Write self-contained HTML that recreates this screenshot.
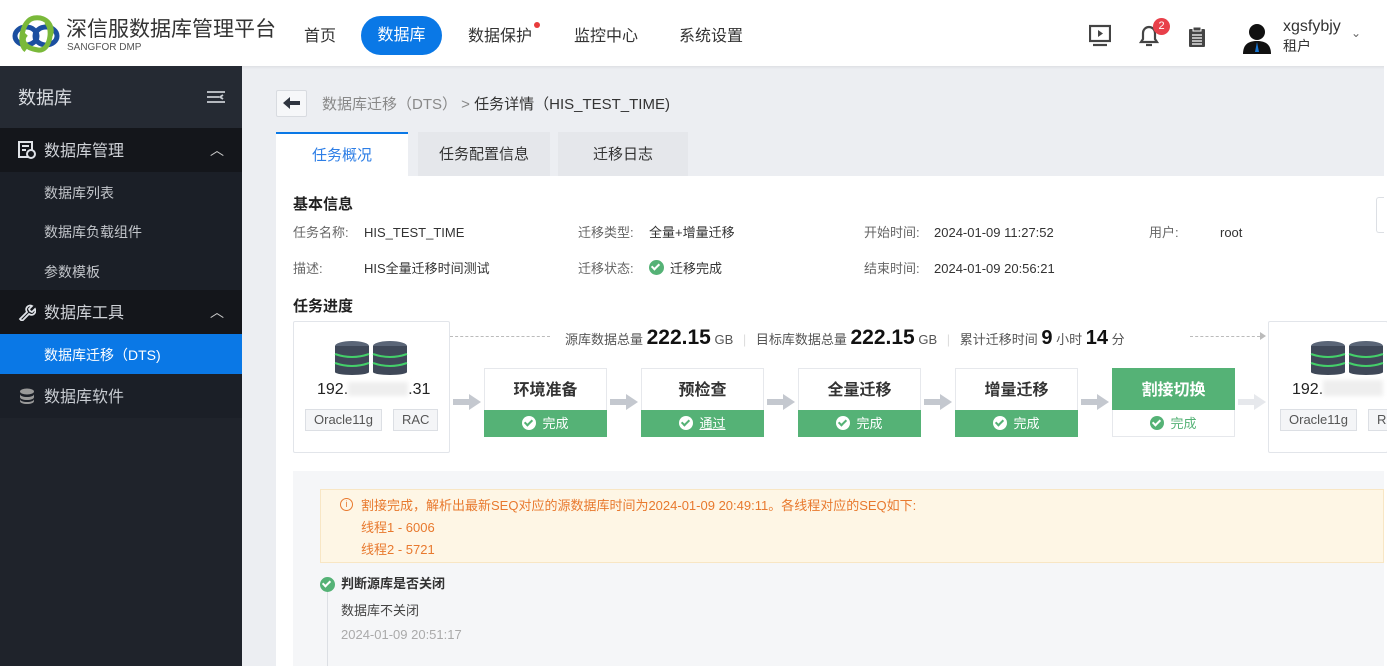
<!DOCTYPE html><html><head><meta charset="utf-8"><style>
*{margin:0;padding:0;box-sizing:border-box}
body{width:1387px;height:666px;overflow:hidden;position:relative;background:#eceef2;font-family:"Liberation Sans","Noto Sans CJK SC",sans-serif;color:#333;font-size:14px}
.a{position:absolute;white-space:nowrap;line-height:1.3}
.hdr{left:0;top:0;width:1387px;height:66px;background:#fff;box-shadow:0 1px 3px rgba(0,0,0,.08)}
.nav{top:27px;font-size:16px;color:#333}
.sb{left:0;top:66px;width:242px;height:600px;background:#1f232b}
.grp{left:0;width:242px;height:44px;background:#14161b;color:#d0d3d8;font-size:16px}
.sub{left:44px;font-size:14px;color:#c2c5ca}
.lbl{color:#666;font-size:13px;line-height:18px}
.val{color:#333;font-size:13px;line-height:18px}
.step{width:123px;height:69px;background:#fff;border:1px solid #e6e8ec}
.step .t{position:absolute;left:0;right:0;top:12px;text-align:center;font-size:16px;font-weight:bold;color:#333}
.step .b{position:absolute;left:-1px;right:-1px;bottom:-1px;height:27px;background:#55b276;color:#fff;text-align:center;font-size:13px;line-height:27px}
.ck{display:inline-block;width:14px;height:14px;border-radius:50%;background:#fff;vertical-align:-2px;margin-right:6px;position:relative}
.ck:after{content:"";position:absolute;left:4px;top:2px;width:3px;height:6px;border:solid #55b276;border-width:0 2px 2px 0;transform:rotate(45deg)}
.ckg{background:#55b276}.ckg:after{border-color:#fff}
.tag{height:22px;border:1px solid #dcdfe4;background:#f4f5f7;color:#555;font-size:13px;line-height:20px;padding:0 8px;top:409px}
</style></head><body>
<div class="a hdr"></div>
<svg class="a" style="left:12px;top:14px" width="48" height="40" viewBox="0 0 48 40"><ellipse cx="14" cy="22" rx="11" ry="9" fill="none" stroke="#1b4fa0" stroke-width="5"/><ellipse cx="34" cy="22" rx="11" ry="9" fill="none" stroke="#1b4fa0" stroke-width="5"/><path d="M14 36 C6 30 10 6 22 4 C36 2 42 14 38 22 M34 8 C42 14 38 38 26 36 C12 34 8 26 14 20" fill="none" stroke="#7ab93a" stroke-width="5"/></svg>
<div class="a" style="left:66px;top:16px;font-size:21px;color:#333">深信服数据库管理平台</div>
<div class="a" style="left:67px;top:42px;font-size:10px;color:#555;line-height:12px">SANGFOR DMP</div>
<div class="a nav" style="left:304px">首页</div>
<div class="a" style="left:361px;top:16px;width:81px;height:39px;border-radius:20px;background:#0a78e6;color:#fff;font-size:16px;text-align:center;line-height:40px">数据库</div>
<div class="a nav" style="left:468px">数据保护</div>
<div class="a" style="left:534px;top:22px;width:6px;height:6px;border-radius:50%;background:#e83b3b"></div>
<div class="a nav" style="left:574px">监控中心</div>
<div class="a nav" style="left:679px">系统设置</div>
<svg class="a" style="left:1089px;top:24px" width="22" height="24" viewBox="0 0 22 24"><rect x="1" y="2" width="20" height="15" fill="none" stroke="#444" stroke-width="2.2"/><path d="M9 6v7l5-3.5z" fill="#444"/><path d="M4 21h14" stroke="#444" stroke-width="2.2"/></svg>
<svg class="a" style="left:1138px;top:24px" width="22" height="24" viewBox="0 0 22 24"><path d="M3 18h16l-2-3V9a6 6 0 0 0-12 0v6z" fill="none" stroke="#444" stroke-width="2.2"/><path d="M8 21h6" stroke="#444" stroke-width="2.2"/></svg>
<div class="a" style="left:1153px;top:18px;width:17px;height:17px;border-radius:50%;background:#e8404a;color:#fff;font-size:11px;text-align:center;line-height:17px">2</div>
<svg class="a" style="left:1188px;top:26px" width="18" height="22" viewBox="0 0 18 22"><rect x="1" y="3" width="16" height="18" rx="1" fill="#444"/><rect x="5" y="1" width="8" height="4" fill="#444" stroke="#fff"/><path d="M4 9h10M4 12h10M4 15h10M4 18h10" stroke="#fff" stroke-width="1.3"/></svg>
<svg class="a" style="left:1242px;top:22px" width="30" height="32" viewBox="0 0 30 32"><circle cx="15" cy="10" r="8" fill="#111"/><path d="M1 32c0-10 6-13 14-13s14 3 14 13z" fill="#111"/><path d="M15 20l-2 10h4z" fill="#1976d2"/></svg>
<div class="a" style="left:1283px;top:17px;font-size:16px;color:#333">xgsfybjy</div>
<div class="a" style="left:1283px;top:37px;font-size:14px;color:#333">租户</div>
<div class="a" style="left:1351px;top:26px;font-size:12px;color:#666">⌄</div>
<div class="a" style="left:1384px;top:66px;width:3px;height:600px;background:#fff"></div>

<div class="a sb"></div>
<div class="a" style="left:0;top:66px;width:242px;height:62px;background:#252a33"></div>
<div class="a" style="left:18px;top:87px;font-size:18px;color:#d8dbe0">数据库</div>
<svg class="a" style="left:207px;top:90px" width="18" height="14"><path d="M0 2h18M0 7h12M0 12h18M16 5l-3 2 3 2" stroke="#c8ccd2" stroke-width="1.8" fill="none"/></svg>
<div class="a grp" style="top:128px"></div>
<div class="a" style="left:44px;top:142px;font-size:16px;color:#d0d3d8">数据库管理</div>
<svg class="a" style="left:18px;top:141px" width="18" height="18"><rect x="1" y="1" width="13" height="15" fill="none" stroke="#e0e3e8" stroke-width="2"/><path d="M4 5h7M4 9h4" stroke="#e0e3e8" stroke-width="2"/><circle cx="13" cy="13" r="4" fill="#14161b" stroke="#e0e3e8" stroke-width="2"/></svg>
<div class="a" style="left:210px;top:141px;color:#ccc;font-size:14px">︿</div>
<div class="a" style="left:0;top:172px;width:242px;height:118px;background:#1b1f27"></div>
<div class="a sub" style="top:184px">数据库列表</div>
<div class="a sub" style="top:223px">数据库负载组件</div>
<div class="a sub" style="top:263px">参数模板</div>
<div class="a grp" style="top:290px"></div>
<div class="a" style="left:44px;top:304px;font-size:16px;color:#d0d3d8">数据库工具</div>
<svg class="a" style="left:18px;top:303px" width="18" height="18" viewBox="0 0 18 18"><path d="M2 16l7-7a4 4 0 0 1 5-6l-3 3 1 2 2 1 3-3a4 4 0 0 1-6 5l-7 7z" fill="none" stroke="#e0e3e8" stroke-width="1.8"/></svg>
<div class="a" style="left:210px;top:303px;color:#ccc;font-size:14px">︿</div>
<div class="a" style="left:0;top:334px;width:242px;height:40px;background:#0a78e6"></div>
<div class="a" style="left:44px;top:346px;font-size:14px;color:#fff">数据库迁移（DTS)</div>
<div class="a grp" style="top:374px;background:#1b1f27"></div>
<svg class="a" style="left:19px;top:388px" width="16" height="16"><ellipse cx="8" cy="3.5" rx="7" ry="3" fill="#999"/><path d="M1 6c0 4 14 4 14 0v3c0 4-14 4-14 0zM1 11c0 4 14 4 14 0v2c0 4-14 4-14 0z" fill="#999"/></svg>
<div class="a" style="left:44px;top:388px;font-size:16px;color:#c8ccd2">数据库软件</div>

<div class="a" style="left:276px;top:90px;width:31px;height:27px;border:1px solid #d8dbe0;background:#f6f7f9;border-radius:2px"></div>
<svg class="a" style="left:283px;top:96px" width="18" height="14"><path d="M0 7l7-6v4h10v4H7v4z" fill="#2f3540"/></svg>
<div class="a" style="left:322px;top:95px;font-size:15px;color:#888">数据库迁移（DTS）  &gt; <span style="color:#333">任务详情（HIS_TEST_TIME)</span></div>
<div class="a" style="left:276px;top:132px;width:132px;height:44px;background:#fff;border-top:2px solid #0a78e6;color:#2d7ee6;font-size:15px;text-align:center;line-height:44px">任务概况</div>
<div class="a" style="left:418px;top:132px;width:132px;height:44px;background:#e5e7eb;font-size:15px;text-align:center;line-height:46px">任务配置信息</div>
<div class="a" style="left:558px;top:132px;width:130px;height:44px;background:#e5e7eb;font-size:15px;text-align:center;line-height:46px">迁移日志</div>
<div class="a" style="left:276px;top:176px;width:1108px;height:490px;background:#fff"></div>
<div class="a" style="left:1376px;top:197px;width:8px;height:36px;border:1px solid #dcdfe4;border-right:none;border-radius:3px 0 0 3px"></div>
<div class="a" style="left:293px;top:195px;font-size:15px;font-weight:bold;color:#222">基本信息</div>
<div class="a lbl" style="left:293px;top:224px">任务名称:</div><div class="a val" style="left:364px;top:224px">HIS_TEST_TIME</div>
<div class="a lbl" style="left:578px;top:224px">迁移类型:</div><div class="a val" style="left:649px;top:224px">全量+增量迁移</div>
<div class="a lbl" style="left:864px;top:224px">开始时间:</div><div class="a val" style="left:934px;top:224px">2024-01-09 11:27:52</div>
<div class="a lbl" style="left:1149px;top:224px">用户:</div><div class="a val" style="left:1220px;top:224px">root</div>
<div class="a lbl" style="left:293px;top:260px">描述:</div><div class="a val" style="left:364px;top:260px">HIS全量迁移时间测试</div>
<div class="a lbl" style="left:578px;top:260px">迁移状态:</div><div class="a val" style="left:649px;top:260px"><span class="ck ckg" style="width:15px;height:15px"></span>迁移完成</div>
<div class="a lbl" style="left:864px;top:260px">结束时间:</div><div class="a val" style="left:934px;top:260px">2024-01-09 20:56:21</div>
<div class="a" style="left:293px;top:297px;font-size:15px;font-weight:bold;color:#222">任务进度</div>

<div class="a" style="left:293px;top:321px;width:157px;height:132px;border:1px solid #e2e5ea;border-radius:2px"></div>
<svg class="a" style="left:334px;top:341px" width="76" height="34" viewBox="0 0 76 34"><g id="d"><ellipse cx="18" cy="5" rx="17" ry="5" fill="#5a6577"/><rect x="1" y="5" width="34" height="26" fill="#3f4858"/><ellipse cx="18" cy="31" rx="17" ry="3" fill="#3f4858"/><path d="M1 13q17 6 34 0M1 22q17 6 34 0" stroke="#44d06a" stroke-width="2" fill="none"/></g><use href="#d" x="38"/></svg>
<div class="a" style="left:317px;top:380px;font-size:16px;color:#222">192.<span style="display:inline-block;width:60px;height:14px;background:#eee;vertical-align:-2px;filter:blur(2px)"></span>.31</div>
<div class="a tag" style="left:305px">Oracle11g</div><div class="a tag" style="left:393px">RAC</div>

<div class="a" style="left:1268px;top:321px;width:120px;height:132px;border:1px solid #e2e5ea;border-radius:2px"></div>
<svg class="a" style="left:1310px;top:341px" width="76" height="34" viewBox="0 0 76 34"><use href="#d"/><use href="#d" x="38"/></svg>
<div class="a" style="left:1292px;top:380px;font-size:16px;color:#222">192.<span style="display:inline-block;width:60px;height:16px;background:#eee;vertical-align:-2px;filter:blur(2px)"></span></div>
<div class="a tag" style="left:1280px">Oracle11g</div><div class="a tag" style="left:1368px">R</div>

<div class="a" style="left:450px;top:336px;width:100px;border-top:1px dashed #bbb"></div>
<div class="a" style="left:1190px;top:336px;width:70px;border-top:1px dashed #bbb"></div>
<div class="a" style="left:1260px;top:332px;border-left:6px solid #bbb;border-top:4px solid transparent;border-bottom:4px solid transparent"></div>
<div class="a" style="left:565px;top:324px;font-size:13px;color:#555">源库数据总量 <b style="font-size:21px;color:#111">222.15</b> GB <span style="color:#ddd;margin:0 6px">|</span> 目标库数据总量 <b style="font-size:21px;color:#111">222.15</b> GB <span style="color:#ddd;margin:0 6px">|</span> 累计迁移时间 <b style="font-size:20px;color:#111">9</b> 小时 <b style="font-size:20px;color:#111">14</b> 分</div>

<div class="a step" style="left:484px;top:368px"><div class="t">环境准备</div><div class="b"><span class="ck"></span>完成</div></div>
<div class="a step" style="left:641px;top:368px"><div class="t">预检查</div><div class="b"><span class="ck"></span><u>通过</u></div></div>
<div class="a step" style="left:798px;top:368px"><div class="t">全量迁移</div><div class="b"><span class="ck"></span>完成</div></div>
<div class="a step" style="left:955px;top:368px"><div class="t">增量迁移</div><div class="b"><span class="ck"></span>完成</div></div>
<div class="a step" style="left:1112px;top:368px;background:#55b276;border-color:#55b276"><div class="t" style="color:#fff">割接切换</div><div class="b" style="background:#fff;color:#55b276;border:1px solid #e6e8ec;border-top:none"><span class="ck ckg"></span>完成</div></div>
<svg class="a" style="left:453px;top:394px" width="28" height="16"><path d="M0 5h16V0l12 8-12 8v-5H0z" fill="#c4c8cf"/></svg>
<svg class="a" style="left:610px;top:394px" width="28" height="16"><path d="M0 5h16V0l12 8-12 8v-5H0z" fill="#c4c8cf"/></svg>
<svg class="a" style="left:767px;top:394px" width="28" height="16"><path d="M0 5h16V0l12 8-12 8v-5H0z" fill="#c4c8cf"/></svg>
<svg class="a" style="left:924px;top:394px" width="28" height="16"><path d="M0 5h16V0l12 8-12 8v-5H0z" fill="#c4c8cf"/></svg>
<svg class="a" style="left:1081px;top:394px" width="28" height="16"><path d="M0 5h16V0l12 8-12 8v-5H0z" fill="#c4c8cf"/></svg>
<svg class="a" style="left:1238px;top:394px" width="28" height="16"><path d="M0 5h16V0l12 8-12 8v-5H0z" fill="#e6e8ec"/></svg>

<div class="a" style="left:293px;top:471px;width:1091px;height:195px;background:#f5f6f8"></div>
<div class="a" style="left:320px;top:489px;width:1064px;height:74px;background:#fef6e5;border:1px solid #f8e6c4"></div>
<div class="a" style="left:340px;top:498px;width:13px;height:13px;border:1.3px solid #e8792e;border-radius:50%;color:#e8792e;font-size:9px;text-align:center;line-height:11px">i</div>
<div class="a" style="left:361px;top:495px;font-size:13px;color:#e8792e;line-height:22px">割接完成，解析出最新SEQ对应的源数据库时间为2024-01-09 20:49:11。各线程对应的SEQ如下:<br>线程1 - 6006<br>线程2 - 5721</div>
<div class="a" style="left:327px;top:590px;width:1px;height:76px;background:#dcdfe4"></div>
<div class="a" style="left:320px;top:576px"><span class="ck ckg" style="width:15px;height:15px"></span></div>
<div class="a" style="left:341px;top:576px;font-size:13px;font-weight:bold;color:#333">判断源库是否关闭</div>
<div class="a" style="left:341px;top:603px;font-size:13px;color:#444">数据库不关闭</div>
<div class="a" style="left:341px;top:627px;font-size:13px;color:#aaa">2024-01-09 20:51:17</div>
</body></html>
